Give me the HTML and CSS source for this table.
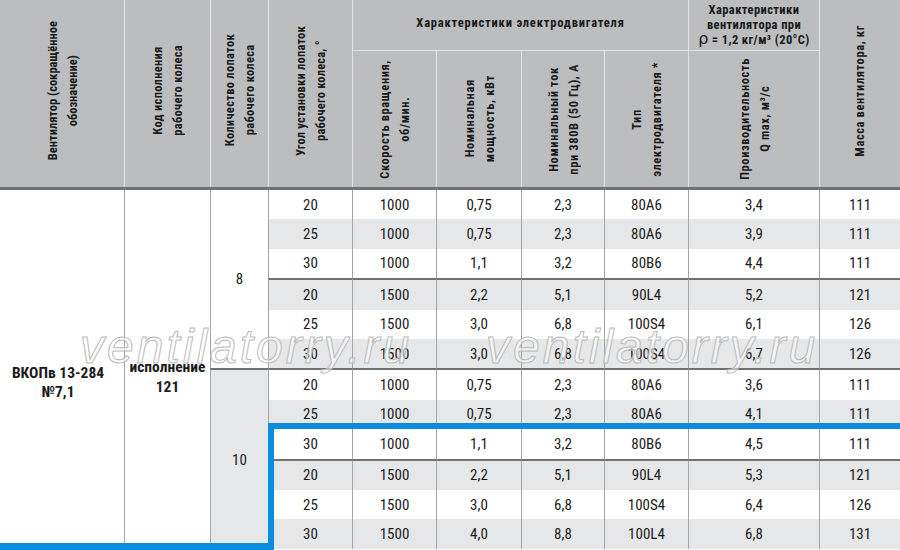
FILE: index.html
```html
<!DOCTYPE html>
<html lang="ru">
<head>
<meta charset="utf-8">
<title>ВКОПв 13-284 №7,1</title>
<link rel="stylesheet" href="styles.css">
</head>
<body>
<div class="sheet">
  <div class="head">
    <div class="hc c1 span2"><span class="v">Вентилятор (сокращённое<br>обозначение)</span></div>
    <div class="hc c2 span2"><span class="v">Код исполнения<br>рабочего колеса</span></div>
    <div class="hc c3 span2"><span class="v">Количество лопаток<br>рабочего колеса</span></div>
    <div class="hc c4 span2"><span class="v">Угол установки лопаток<br>рабочего колеса, °</span></div>
    <div class="hc grp motor"><span>Характеристики электродвигателя</span></div>
    <div class="hc grp fanp"><span>Характеристики<br>вентилятора при<br><span class="rho">ρ</span> = 1,2 кг/м³ (20°С)</span></div>
    <div class="hc c10 span2"><span class="v">Масса вентилятора, кг</span></div>
    <div class="hc sub"><span class="v">Скорость вращения,<br>об/мин.</span></div>
    <div class="hc sub"><span class="v">Номинальная<br>мощность, кВт</span></div>
    <div class="hc sub"><span class="v">Номинальный ток<br>при 380В (50 Гц), А</span></div>
    <div class="hc sub"><span class="v">Тип<br>электродвигателя *</span></div>
    <div class="hc sub"><span class="v">Производительность<br>Q max, м³/с</span></div>
  </div>

  <div class="body">
    <div class="cell fan"><span>ВКОПв 13-284<br>№7,1</span></div>
    <div class="cell code"><span>исполнение<br>121</span></div>
    <div class="cell blades b8">8</div>
    <div class="cell blades b10">10</div>

    <div class="row"><div>20</div><div>1000</div><div>0,75</div><div>2,3</div><div>80A6</div><div>3,4</div><div>111</div></div>
    <div class="row g"><div>25</div><div>1000</div><div>0,75</div><div>2,3</div><div>80A6</div><div>3,9</div><div>111</div></div>
    <div class="row"><div>30</div><div>1000</div><div>1,1</div><div>3,2</div><div>80B6</div><div>4,4</div><div>111</div></div>
    <div class="row g sep"><div>20</div><div>1500</div><div>2,2</div><div>5,1</div><div>90L4</div><div>5,2</div><div>121</div></div>
    <div class="row"><div>25</div><div>1500</div><div>3,0</div><div>6,8</div><div>100S4</div><div>6,1</div><div>126</div></div>
    <div class="row g"><div>30</div><div>1500</div><div>3,0</div><div>6,8</div><div>100S4</div><div>6,7</div><div>126</div></div>
    <div class="row sep"><div>20</div><div>1000</div><div>0,75</div><div>2,3</div><div>80A6</div><div>3,6</div><div>111</div></div>
    <div class="row g"><div>25</div><div>1000</div><div>0,75</div><div>2,3</div><div>80A6</div><div>4,1</div><div>111</div></div>
    <div class="row"><div>30</div><div>1000</div><div>1,1</div><div>3,2</div><div>80B6</div><div>4,5</div><div>111</div></div>
    <div class="row g sep"><div>20</div><div>1500</div><div>2,2</div><div>5,1</div><div>90L4</div><div>5,3</div><div>121</div></div>
    <div class="row"><div>25</div><div>1500</div><div>3,0</div><div>6,8</div><div>100S4</div><div>6,4</div><div>126</div></div>
    <div class="row g"><div>30</div><div>1500</div><div>4,0</div><div>8,8</div><div>100L4</div><div>6,8</div><div>131</div></div>
  </div>

  <div class="wm wm1">ventilatorry.ru</div>
  <div class="wm wm2">ventilatorry.ru</div>

  <div class="hl-box"></div>
  <div class="hl-base"></div>
</div>
</body>
</html>
```

FILE: styles.css
```css
* { box-sizing: border-box; }

html, body {
  margin: 0;
  padding: 0;
  background: #ffffff;
}

.sheet {
  position: relative;
  width: 900px;
  height: 550px;
  overflow: hidden;
  font-family: "Roboto Condensed", "Liberation Sans Narrow", "Arial Narrow", "DejaVu Sans Condensed", sans-serif;
  color: #1b1b1b;
}

/* ---------- header ---------- */
.head {
  display: grid;
  grid-template-columns: 124px 86px 58px 84px 84px 85px 83px 84px 131px 81px;
  grid-template-rows: 51px 136px;
  background: #bcbdbf;
  border-bottom: 3px solid #707172;
  height: 190px;
}

.hc {
  display: flex;
  align-items: center;
  justify-content: center;
  text-align: center;
  font-weight: bold;
  font-size: 12.5px;
  line-height: 15px;
  letter-spacing: 0.6px;
  color: #1a1a1a;
  border-left: 1px solid #e2e3e4;
  white-space: nowrap;
}

.hc.c1 { border-left: none; grid-column: 1; letter-spacing: 0; }
.span2 { grid-row: 1 / 3; }
.c2 { grid-column: 2; letter-spacing: 0.3px; }
.c3 { grid-column: 3; letter-spacing: 0.3px; }
.c4 { grid-column: 4; letter-spacing: 0.2px; }
.c10 { grid-column: 10; }

.v {
  writing-mode: vertical-rl;
  transform: rotate(180deg);
  line-height: 19.5px;
}

.span2 .v { margin-bottom: 6px; }

.grp { border-bottom: 1px solid #e2e3e4; }
.motor { grid-column: 5 / 9; grid-row: 1; padding-bottom: 6px; letter-spacing: 0.8px; }
.fanp { grid-column: 9; grid-row: 1; line-height: 14.5px; padding-top: 1px; letter-spacing: 0.4px; }
.rho { font-size: 16px; font-weight: normal; font-family: "DejaVu Sans", sans-serif; letter-spacing: 0; }
.sub { grid-row: 2; }

/* ---------- body ---------- */
.body {
  display: grid;
  grid-template-columns: 124px 86px 58px 84px 84px 85px 83px 84px 131px 81px;
  grid-template-rows: 29.4px 29.4px 29.4px 31.4px 29.4px 29.4px 31.4px 29.4px 29.4px 31.4px 29.4px 29.4px;
  font-size: 15px;
}

.cell,
.row > div {
  display: flex;
  align-items: center;
  justify-content: center;
  text-align: center;
  border-left: 1px solid #a3a4a5;
  white-space: nowrap;
}

.row { display: contents; }
.row > div { background: #ffffff; }
.row.g > div { background: #e6e7e8; }
.row.sep > div { border-top: 2px solid #6f7071; }

.fan {
  grid-column: 1;
  grid-row: 1 / 13;
  border-left: none;
  font-weight: bold;
  font-size: 15.5px;
  line-height: 19px;
  padding: 27px 8px 0 0;
}

.code {
  grid-column: 2;
  grid-row: 1 / 13;
  font-weight: bold;
  font-size: 15.5px;
  line-height: 20px;
  padding-top: 16px;
}

.blades { grid-column: 3; }
.b8 { grid-row: 1 / 7; background: #ffffff; }
.b10 { grid-row: 7 / 13; background: #e6e7e8; border-top: 2px solid #6f7071; }

/* ---------- watermark ---------- */
.wm {
  position: absolute;
  top: 320px;
  font-family: "Liberation Sans", Arial, sans-serif;
  font-style: italic;
  font-size: 48px;
  line-height: 54px;
  color: rgba(255, 255, 255, 0.55);
  -webkit-text-stroke: 1px #b9babb;
  letter-spacing: 3px;
  pointer-events: none;
  white-space: nowrap;
}
.wm1 { left: 80px; }
.wm2 { left: 486px; }

/* ---------- highlight ---------- */
.hl-box {
  position: absolute;
  left: 268px;
  top: 423px;
  right: 0;
  bottom: 0;
  border-top: 6px solid #0b8ddf;
  border-left: 6px solid #0b8ddf;
}

.hl-base {
  position: absolute;
  left: 0;
  bottom: 0;
  width: 274px;
  height: 7px;
  background: #0b8ddf;
}
```
